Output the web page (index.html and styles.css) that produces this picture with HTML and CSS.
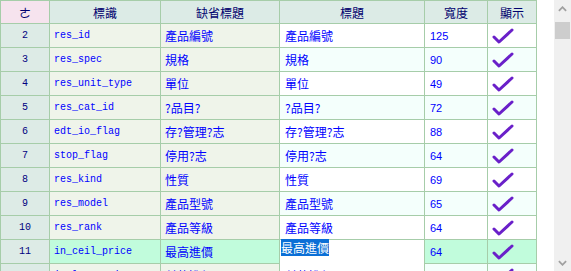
FILE: index.html
```html
<!DOCTYPE html>
<html>
<head>
<meta charset="utf-8">
<link rel="stylesheet" href="styles.css">
</head>
<body>
<div class="frame">
  <div class="viewport">
    <div class="grid">
      <div class="hd hd-corner">ㄜ</div>
      <div class="hd">標識</div>
      <div class="hd">缺省標題</div>
      <div class="hd">標題</div>
      <div class="hd">寬度</div>
      <div class="hd">顯示</div>

      <div class="c num">2</div><div class="c id">res_id</div><div class="c def">產品編號</div><div class="c cap even">產品編號</div><div class="c w even">125</div><div class="c chk even"><svg viewBox="0 0 24 24" class="tick"><polyline points="4,13 9,18 22,6"/></svg></div>
      <div class="c num">3</div><div class="c id">res_spec</div><div class="c def">規格</div><div class="c cap odd">規格</div><div class="c w odd">90</div><div class="c chk odd"><svg viewBox="0 0 24 24" class="tick"><polyline points="4,13 9,18 22,6"/></svg></div>
      <div class="c num">4</div><div class="c id">res_unit_type</div><div class="c def">單位</div><div class="c cap even">單位</div><div class="c w even">49</div><div class="c chk even"><svg viewBox="0 0 24 24" class="tick"><polyline points="4,13 9,18 22,6"/></svg></div>
      <div class="c num">5</div><div class="c id">res_cat_id</div><div class="c def">?品目?</div><div class="c cap odd">?品目?</div><div class="c w odd">72</div><div class="c chk odd"><svg viewBox="0 0 24 24" class="tick"><polyline points="4,13 9,18 22,6"/></svg></div>
      <div class="c num">6</div><div class="c id">edt_io_flag</div><div class="c def">存?管理?志</div><div class="c cap even">存?管理?志</div><div class="c w even">88</div><div class="c chk even"><svg viewBox="0 0 24 24" class="tick"><polyline points="4,13 9,18 22,6"/></svg></div>
      <div class="c num">7</div><div class="c id">stop_flag</div><div class="c def">停用?志</div><div class="c cap odd">停用?志</div><div class="c w odd">64</div><div class="c chk odd"><svg viewBox="0 0 24 24" class="tick"><polyline points="4,13 9,18 22,6"/></svg></div>
      <div class="c num">8</div><div class="c id">res_kind</div><div class="c def">性質</div><div class="c cap even">性質</div><div class="c w even">69</div><div class="c chk even"><svg viewBox="0 0 24 24" class="tick"><polyline points="4,13 9,18 22,6"/></svg></div>
      <div class="c num">9</div><div class="c id">res_model</div><div class="c def">產品型號</div><div class="c cap odd">產品型號</div><div class="c w odd">65</div><div class="c chk odd"><svg viewBox="0 0 24 24" class="tick"><polyline points="4,13 9,18 22,6"/></svg></div>
      <div class="c num">10</div><div class="c id">res_rank</div><div class="c def">產品等級</div><div class="c cap even">產品等級</div><div class="c w even">64</div><div class="c chk even"><svg viewBox="0 0 24 24" class="tick"><polyline points="4,13 9,18 22,6"/></svg></div>
      <div class="c num">11</div><div class="c id sel">in_ceil_price</div><div class="c def sel">最高進價</div><div class="c cap sel editing"><div class="editor"><span class="hl">最高進價</span></div></div><div class="c w sel">64</div><div class="c chk sel"><svg viewBox="0 0 24 24" class="tick"><polyline points="4,13 9,18 22,6"/></svg></div>
      <div class="c num">12</div><div class="c id">in_last_price</div><div class="c def">付款進價</div><div class="c cap blank">付款進價</div><div class="c w odd">64</div><div class="c chk odd"><svg viewBox="0 0 24 24" class="tick"><polyline points="4,13 9,18 22,6"/></svg></div>
    </div>
  </div>
  <div class="gap"></div>
  <div class="scrollbar">
    <div class="arrow"><svg viewBox="0 0 10 6" class="chev"><polyline points="1,5 5,1 9,5"/></svg></div>
    <div class="track"><div class="thumb"></div></div>
    <div class="arrow down"><svg viewBox="0 0 10 6" class="chev"><polyline points="1,1 5,5 9,1"/></svg></div>
  </div>
</div>
</body>
</html>
```

FILE: styles.css
```css
html, body {
  margin: 0;
  padding: 0;
  background: #ffffff;
}

.frame {
  display: flex;
  width: 571px;
  height: 271px;
  overflow: hidden;
}

.viewport {
  width: 537px;
  height: 271px;
  overflow: hidden;
  flex: none;
}

.gap {
  width: 17px;
  flex: none;
  background: #ffffff;
}

.grid {
  display: grid;
  grid-template-columns: 49px 111px 119px 145px 63px 49px;
  grid-template-rows: 23px;
  grid-auto-rows: 24px;
  border-left: 1px solid #a6cda9;
  border-top: 1px solid #a6cda9;
  width: 536px;
}

.hd, .c {
  box-sizing: border-box;
  border-right: 1px solid #a6cda9;
  border-bottom: 1px solid #a6cda9;
  display: flex;
  align-items: center;
  overflow: hidden;
  white-space: nowrap;
}

.hd {
  justify-content: center;
  background: #dcebe6;
  color: #00006e;
  font-family: "Noto Sans CJK TC", sans-serif;
  font-size: 12px;
  padding-top: 1px;
}

.hd-corner {
  background: #f6e3ee;
}

.c {
  font-family: "Noto Sans CJK TC", sans-serif;
  font-size: 12px;
  color: #0000ff;
  padding-left: 4px;
}

.num {
  justify-content: center;
  padding-left: 0;
  background: #ddebe6;
  color: #000080;
  font-family: "Liberation Mono", monospace;
  font-size: 10px;
}

.id {
  background: #eff4ea;
  font-family: "Liberation Mono", monospace;
  font-size: 10px;
}

.def {
  background: #eff4ea;
}

.cap {
  padding-left: 5px;
}

.w {
  font-family: "Liberation Sans", sans-serif;
  font-size: 11px;
  padding-left: 5px;
}

.even {
  background: #ffffff;
}

.odd {
  background: #f4fffc;
}

.sel {
  background: #c1fcdc;
}

.blank {
  background: #ffffff;
}

.chk {
  padding-left: 2px;
}

.tick {
  width: 24px;
  height: 24px;
  margin-top: 1px;
}

.tick polyline {
  fill: none;
  stroke: #6a20c9;
  stroke-width: 3;
  stroke-linecap: round;
  stroke-linejoin: round;
}

.editing {
  position: relative;
  overflow: visible;
  background: #ffffff;
}

.editor {
  position: absolute;
  left: 0;
  top: 0;
  width: 144px;
  height: 26px;
  background: #ffffff;
  padding: 1px 0 0 1px;
  box-sizing: border-box;
  z-index: 2;
  font-family: "Noto Sans CJK TC", sans-serif;
  font-size: 12px;
  line-height: 13px;
}

.hl {
  background: #0b6fd6;
  color: #ffffff;
}

.scrollbar {
  width: 17px;
  height: 271px;
  flex: none;
  background: #f0f0f0;
  display: flex;
  flex-direction: column;
}

.arrow {
  height: 17px;
  display: flex;
  align-items: center;
  justify-content: center;
}

.chev {
  width: 9px;
  height: 6px;
}

.chev polyline {
  fill: none;
  stroke: #a0a0a0;
  stroke-width: 2;
}

.track {
  flex: 1;
  padding-top: 5px;
}

.thumb {
  margin-left: 1px;
  width: 15px;
  height: 17px;
  background: #cdcdcd;
}
```
